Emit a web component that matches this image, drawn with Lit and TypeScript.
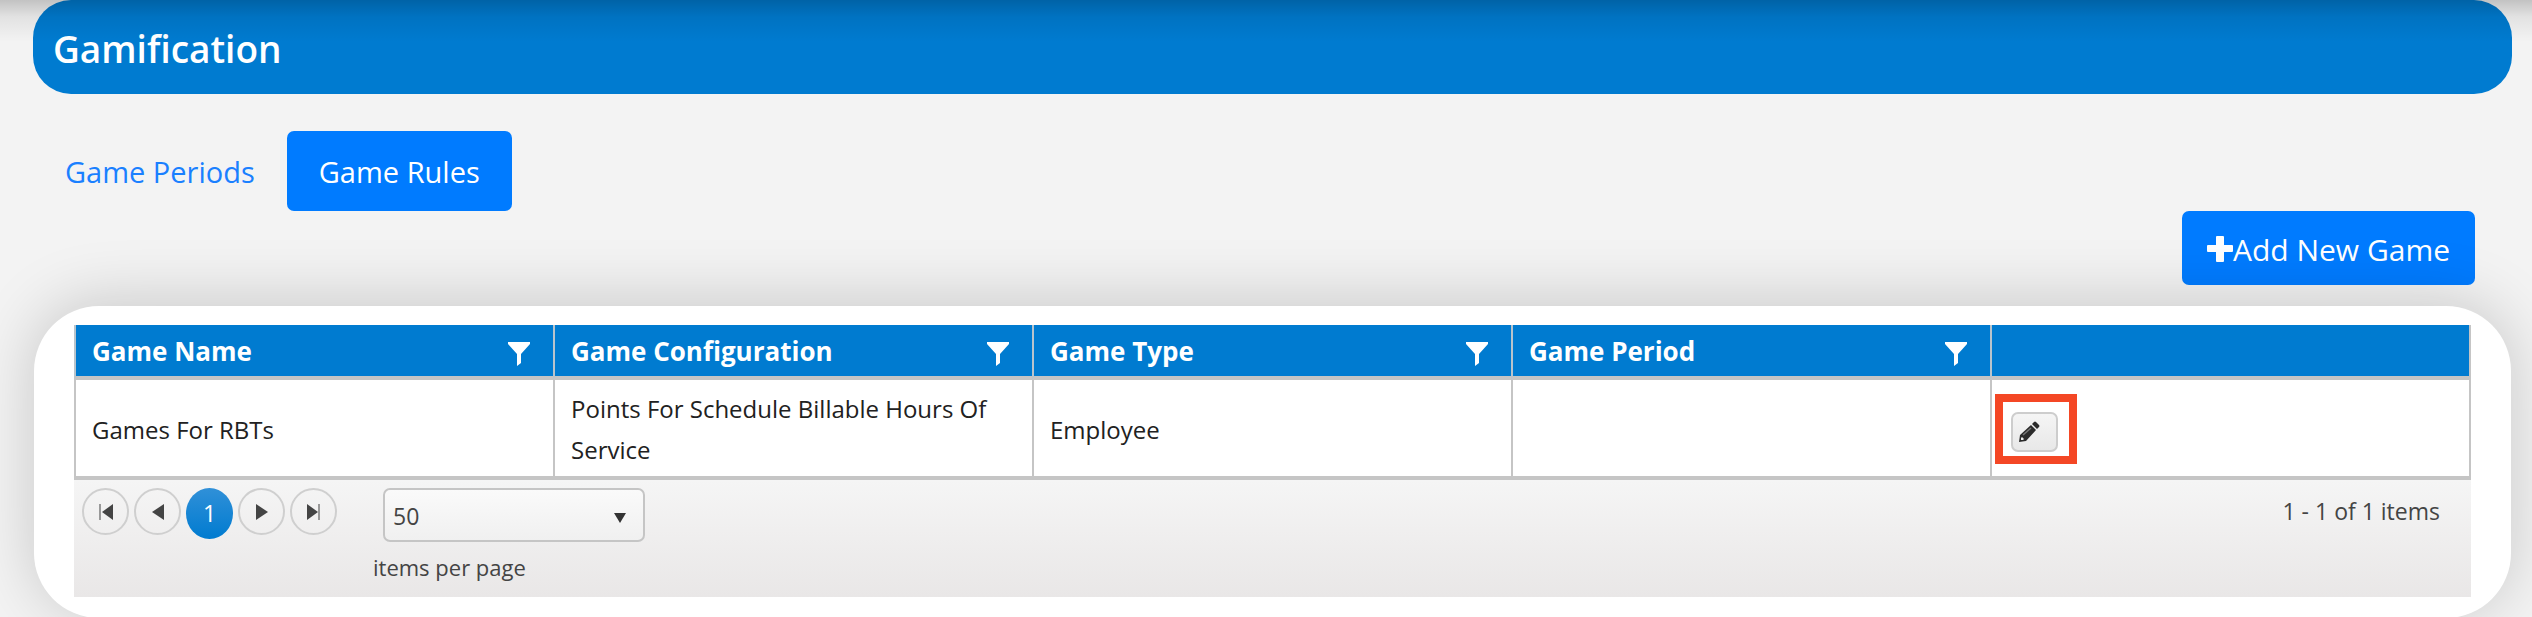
import { LitElement, html, css, svg, nothing } from "lit";
import { customElement, property } from "lit/decorators.js";

const glyphs = {
  first: svg`<path d="M1 0H3V16H1Z" fill="#999"/><path d="M15 0V16L4 8Z" fill="#444"/>`,
  prev: svg`<path d="M14 0V16L2 8Z" fill="#444"/>`,
  next: svg`<path d="M2 0V16L14 8Z" fill="#444"/>`,
  last: svg`<path d="M12 0H14V16H12Z" fill="#999"/><path d="M1 0V16L12 8Z" fill="#444"/>`,
};

interface Rule {
  name: string;
  configuration: string;
  type: string;
  period: string;
}

@customElement("rules-pager")
class RulesPager extends LitElement {
  @property({ type: Number }) total = 1;

  static styles = css`
    :host {
      display: flex;
      align-items: flex-start;
      box-sizing: border-box;
      min-height: 121px;
      padding: 8px 31px 0 8px;
      border-top: 4px solid #c5c5c5;
      background: linear-gradient(#f5f5f5, #e9e7e7);
      color: #444;
      font-size: 23px;
      line-height: 41px;
    }
    .pages {
      display: flex;
      gap: 5px;
    }
    .page {
      display: grid;
      place-items: center;
      box-sizing: border-box;
      width: 47px;
      height: 47px;
      padding: 0;
      border: 2px solid #cfcfcf;
      border-radius: 50%;
      background: transparent;
      color: inherit;
      font: inherit;
    }
    .current {
      height: 51px;
      border: 0;
      background: linear-gradient(#3090d8, #007bd0);
      color: #fff;
    }
    .arrow {
      width: 16px;
      height: 16px;
    }
    .size {
      display: grid;
      gap: 5px;
      margin-left: 36px;
      font-size: 22px;
    }
    .picker {
      display: grid;
      width: 262px;
      margin-left: 10px;
    }
    select {
      grid-area: 1 / 1;
      appearance: none;
      box-sizing: border-box;
      height: 54px;
      padding: 2px 8px 0;
      border: 2px solid #c5c5c5;
      border-radius: 7px;
      background: linear-gradient(#fafafa, #f0f0f0);
      color: #444;
      font: inherit;
      font-size: 23px;
    }
    .caret {
      grid-area: 1 / 1;
      place-self: center end;
      width: 12px;
      height: 10px;
      margin: 6px 19px 0 0;
      pointer-events: none;
    }
    .info {
      margin-left: auto;
      padding-top: 3px;
    }
  `;

  render() {
    const step = (kind: keyof typeof glyphs, label: string) => html`
      <button class="page" aria-label=${label}>
        <svg class="arrow" viewBox="0 0 16 16">${glyphs[kind]}</svg>
      </button>`;
    return html`
      <div class="pages">
        ${step("first", "First page")} ${step("prev", "Previous page")}
        <button class="page current" aria-current="page">1</button>
        ${step("next", "Next page")} ${step("last", "Last page")}
      </div>
      <div class="size">
        <div class="picker">
          <select id="size"><option>50</option></select>
          <svg class="caret" viewBox="0 0 12 10"><path d="M0 0H12L6 10Z" fill="#333" /></svg>
        </div>
        <label for="size">items per page</label>
      </div>
      <div class="info">1 - ${this.total} of ${this.total} items</div>
    `;
  }
}

@customElement("rules-grid")
class RulesGrid extends LitElement {
  @property({ attribute: false }) rules: Rule[] = [];

  static styles = css`
    :host {
      display: block;
    }
    table {
      width: 100%;
      table-layout: fixed;
      border-collapse: separate;
      border-spacing: 0;
      border-right: 2px solid #c5c5c5;
    }
    th {
      height: 50px;
      padding: 1px 22px 0 16px;
      border-left: 2px solid #b9c4cc;
      border-bottom: 4px solid #c5c5c5;
      background: #007bd0;
      color: #fff;
      font-size: 26px;
      font-weight: 700;
      line-height: 36px;
      text-align: left;
    }
    .head {
      display: flex;
      align-items: center;
      justify-content: space-between;
    }
    .filter {
      display: block;
      padding: 6px 0 0;
      border: 0;
      background: none;
      line-height: 0;
    }
    .funnel {
      width: 24px;
      height: 24px;
    }
    td {
      padding: 8px 16px 6px;
      border-left: 2px solid #c5c5c5;
      background: #fff;
      color: #212121;
      font-size: 24px;
      line-height: 41px;
    }
    .actions {
      padding: 1px 3px 0;
      line-height: 0;
    }
    .highlight {
      display: inline-block;
      padding: 10px 11px 4px 8px;
      border: 8px solid #f44725;
    }
    .edit {
      display: flex;
      align-items: center;
      box-sizing: border-box;
      width: 47px;
      height: 40px;
      padding: 0 5px;
      border: 2px solid #cdcdcd;
      border-radius: 7px;
      background: linear-gradient(#f5f5f5, #e8e8e8);
    }
    .pencil {
      width: 22px;
      height: 22px;
    }
  `;

  render() {
    const column = (title: string) => html`
      <th scope="col">
        ${title
          ? html`<div class="head">
              ${title}
              <button class="filter" aria-label="Filter ${title}">
                <svg class="funnel" viewBox="0 0 24 24">
                  <path d="M1 0H23V2L14 12V21L10 24V12L1 2Z" fill="#fff" />
                </svg>
              </button>
            </div>`
          : nothing}
      </th>`;
    return html`
      <table>
        <thead>
          <tr>
            ${["Game Name", "Game Configuration", "Game Type", "Game Period", ""].map(column)}
          </tr>
        </thead>
        <tbody>
          ${this.rules.map(
            (rule) => html`<tr>
              <td>${rule.name}</td>
              <td>${rule.configuration}</td>
              <td>${rule.type}</td>
              <td>${rule.period}</td>
              <td class="actions">
                <span class="highlight">
                  <button class="edit" aria-label="Edit ${rule.name}">
                    <svg class="pencil" viewBox="0 0 22 22">
                      <path
                        d="M1 21L2 14L13 4L18 9L8 20ZM3 17L3 19L5 19L6 18L4 16Z"
                        fill="#2b2b2b"
                        fill-rule="evenodd"
                      />
                      <path d="M5 14L13 7" stroke="#777" stroke-width="1.5" />
                      <path d="M14 3L16 1Q17 0 18 1L21 4Q22 5 21 6L19 8Z" fill="#2b2b2b" />
                    </svg>
                  </button>
                </span>
              </td>
            </tr>`
          )}
        </tbody>
      </table>
      <rules-pager .total=${this.rules.length}></rules-pager>
    `;
  }
}

@customElement("app-root")
class AppRoot extends LitElement {
  static styles = css`
    :host {
      display: block;
      position: relative;
      min-height: 100vh;
      overflow: hidden;
      background: #f3f3f3;
      font-family: "Open Sans", "Noto Sans", sans-serif;
    }
    .shade {
      position: absolute;
      inset: 0 0 auto;
      height: 42px;
      background: linear-gradient(rgba(0, 0, 0, 0.2), rgba(0, 0, 0, 0.07) 40%, transparent);
      pointer-events: none;
    }
    .title {
      margin: 0 20px 0 33px;
      padding: 24px 20px 20px;
      border-radius: 38px;
      background: #007bd0;
      color: #fff;
      font-size: 37px;
      font-weight: 600;
      line-height: 50px;
    }
    .tabs {
      display: flex;
      margin: 37px 33px 0;
    }
    .tab {
      padding: 1px 32px 0;
      border-radius: 7px;
      color: #1a80ff;
      font-size: 29px;
      line-height: 79px;
      text-decoration: none;
    }
    .active {
      background: #007bff;
      color: #fff;
    }
    .toolbar {
      display: flex;
      justify-content: flex-end;
      padding: 0 57px 21px;
    }
    .add {
      display: flex;
      align-items: center;
      height: 74px;
      padding: 2px 25px 0;
      border: 0;
      border-radius: 7px;
      background: #007bff;
      color: #fff;
      font-family: inherit;
      font-size: 30px;
    }
    .plus {
      width: 26px;
      height: 26px;
    }
    .card {
      position: relative;
      margin: 0 21px 0 34px;
      padding: 19px 40px 21px;
      border-radius: 65px;
      background: #fff;
      box-shadow: 0 -4px 64px rgba(0, 0, 0, 0.18);
    }
  `;

  render() {
    const rules: Rule[] = [
      {
        name: "Games For RBTs",
        configuration: "Points For Schedule Billable Hours Of Service",
        type: "Employee",
        period: "",
      },
    ];
    return html`
      <header class="title">Gamification</header>
      <nav class="tabs">
        <a class="tab" href="#periods">Game Periods</a>
        <a class="tab active" href="#rules" aria-current="page">Game Rules</a>
      </nav>
      <div class="toolbar">
        <button class="add">
          <svg class="plus" viewBox="0 0 26 26">
            <path
              d="M10 0H16Q17 0 17 1V9H25Q26 9 26 10V15Q26 16 25 16H17V25Q17 26 16 26H10Q9 26 9 25V16H1Q0 16 0 15V10Q0 9 1 9H9V1Q9 0 10 0Z"
              fill="#fff"
            />
          </svg>
          Add New Game
        </button>
      </div>
      <main class="card">
        <rules-grid .rules=${rules}></rules-grid>
      </main>
      <div class="shade"></div>
    `;
  }
}
